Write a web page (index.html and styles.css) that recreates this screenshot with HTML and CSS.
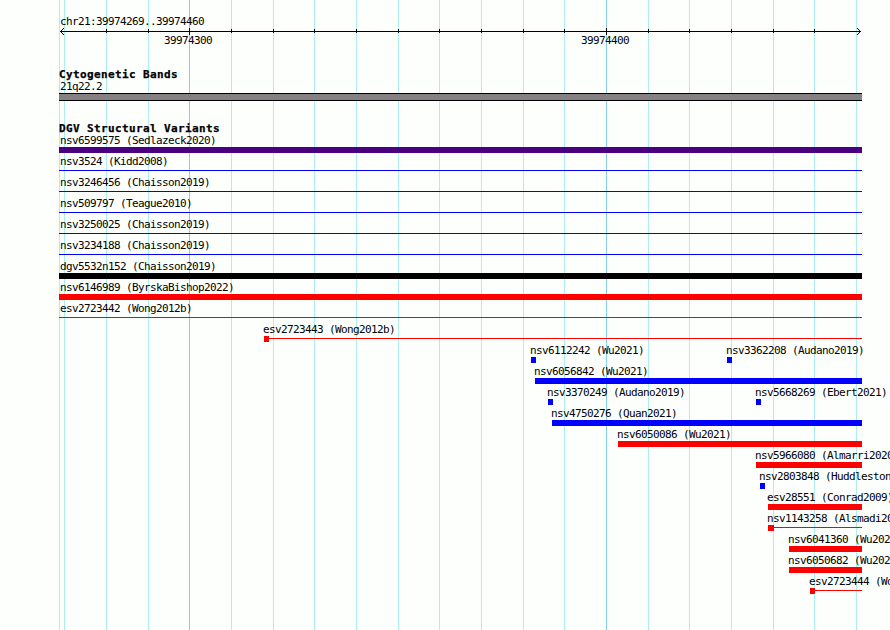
FILE: index.html
```html
<!DOCTYPE html>
<html lang="en">
<head>
<meta charset="utf-8">
<title>chr21:39974269..39974460</title>
<link rel="stylesheet" href="styles.css">
</head>
<body>
<main class="browser">
<svg class="grid" width="890" height="630" shape-rendering="crispEdges" aria-hidden="true">
<path class="minor" d="M59.5 0v630M64.5 0v630M106.5 0v630M148.5 0v630M231.5 0v630M273.5 0v630M314.5 0v630M356.5 0v630M398.5 0v630M439.5 0v630M481.5 0v630M523.5 0v630M564.5 0v630M648.5 0v630M689.5 0v630M731.5 0v630M773.5 0v630M814.5 0v630M856.5 0v630"/>
<path class="major" d="M189.5 0v630M606.5 0v630"/>
</svg>
<header class="ruler">
<div class="range">chr21:39974269..39974460</div>
<svg class="axis" width="803" height="8" shape-rendering="crispEdges" aria-hidden="true">
<path d="M1 3.5H802M47.5 1v4M89.5 1v4M130.5 0v7M172.5 1v4M214.5 1v4M255.5 1v4M297.5 1v4M339.5 1v4M380.5 1v4M422.5 1v4M464.5 1v4M505.5 1v4M547.5 0v7M589.5 1v4M630.5 1v4M672.5 1v4M714.5 1v4M755.5 1v4"/>
<path d="M2.5 2v3M3.5 1v1M3.5 5v1M4.5 0v1M4.5 6v1M800.5 2v3M799.5 1v1M799.5 5v1M798.5 0v1M798.5 6v1"/>
</svg>
<div class="ticks"><span>39974300</span><span>39974400</span></div>
</header>
<section class="cyto">
<h2>Cytogenetic Bands</h2>
<div class="label start">21q22.2</div>
<div class="band"></div>
</section>
<section class="variants">
<h2>DGV Structural Variants</h2>
<div id="rows"></div>
</section>
</main>
<script src="app.js"></script>
</body>
</html>
```
FILE: styles.css
```css
* { box-sizing: border-box; }
body { margin: 0; background: #fdfffc; color: #000; font: 11px/14px "DejaVu Sans Mono", monospace; letter-spacing: -0.622px; }
.browser { position: relative; width: 890px; height: 630px; padding: 15px 0 0 59px; overflow: hidden; }
.grid { position: absolute; left: 0; top: 0; z-index: -1; }
.minor { stroke: #afeeee; }
.major { stroke: #87ceeb; }
.range { height: 13px; padding-left: 1px; }
.axis { display: block; stroke: #000; fill: none; }
.ticks { display: flex; gap: 369px; height: 12px; margin-top: -2px; padding-left: 105px; }
.ticks span { width: 48px; white-space: nowrap; }
.cyto { margin-top: 22px; height: 54px; }
h2 { margin: 0; height: 12px; font-size: 11px; line-height: 14px; letter-spacing: 0.378px; white-space: nowrap; -webkit-text-stroke: 0.25px #000; }
.label { height: 13px; text-indent: -1px; white-space: nowrap; }
.label.start { text-indent: 1px; }
.band { width: 803px; height: 8px; background: #848084; border: solid #000; border-width: 1px 0; }
.row { display: grid; grid-template-columns: 831px; height: 21px; }
.variant { grid-area: 1 / 1; height: 21px; }
.thin { height: 6px; background: linear-gradient(var(--tone), var(--tone)) 0 2px / 100% 1px no-repeat; }
.bar { height: 6px; background: var(--tone); }
.red { --tone: #f00; }
.blue { --tone: #00f; }
.black { --tone: #000; }
.indigo { --tone: #4b0082; }
```
FILE: app.js
```js
// Each variant: label, tone, start x, bar width (0 = none), thin line
const LEFT = 59;
const RIGHT = 862;
const rows = [
  [["nsv6599575 (Sedlazeck2020)", "indigo", 59, 803]],
  [["nsv3524 (Kidd2008)", "blue", 59, 0, true]],
  [["nsv3246456 (Chaisson2019)", "blue", 59, 0, true]],
  [["nsv509797 (Teague2010)", "blue", 59, 0, true]],
  [["nsv3250025 (Chaisson2019)", "blue", 59, 0, true]],
  [["nsv3234188 (Chaisson2019)", "blue", 59, 0, true]],
  [["dgv5532n152 (Chaisson2019)", "black", 59, 803]],
  [["nsv6146989 (ByrskaBishop2022)", "red", 59, 803]],
  [["esv2723442 (Wong2012b)", "red", 59, 0, true]],
  [["esv2723443 (Wong2012b)", "red", 264, 5, true]],
  [["nsv6112242 (Wu2021)", "blue", 531, 5], ["nsv3362208 (Audano2019)", "blue", 727, 5]],
  [["nsv6056842 (Wu2021)", "blue", 535, 327]],
  [["nsv3370249 (Audano2019)", "blue", 548, 5], ["nsv5668269 (Ebert2021)", "blue", 756, 5]],
  [["nsv4750276 (Quan2021)", "blue", 552, 310]],
  [["nsv6050086 (Wu2021)", "red", 618, 244]],
  [["nsv5966080 (Almarri2020)", "red", 756, 106]],
  [["nsv2803848 (Huddleston2016)", "blue", 760, 5]],
  [["esv28551 (Conrad2009)", "red", 768, 94]],
  [["nsv1143258 (Alsmadi2014)", "red", 768, 6, true]],
  [["nsv6041360 (Wu2021)", "red", 789, 73]],
  [["nsv6050682 (Wu2021)", "red", 789, 73]],
  [["esv2723444 (Wong2012b)", "red", 810, 5, true]],
];
document.getElementById("rows").innerHTML = rows.map(items =>
  `<div class="row">${items.map(([name, tone, x, width, thin]) => {
    const bar = width ? `<div class="bar" style="width:${width}px"></div>` : "";
    return `<div class="variant ${tone}" style="margin-left:${x - LEFT}px">
      <div class="label${x === LEFT ? " start" : ""}">${name}</div>
      <div class="${thin ? "thin" : "solid"}" style="width:${RIGHT - x}px">${bar}</div></div>`;
  }).join("")}</div>`).join("");
```
